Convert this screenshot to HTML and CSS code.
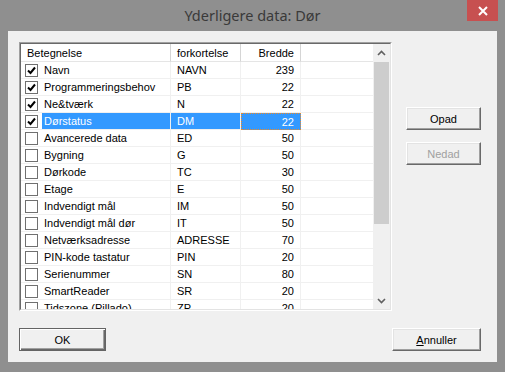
FILE: index.html
```html
<!DOCTYPE html>
<html lang="da">
<head>
    <meta charset="UTF-8">
    <title>Yderligere data: Dør</title>
    <link rel="stylesheet" href="styles.css">
</head>
<body>
    <div class="window">
        <div class="titlebar">
            <span class="title">Yderligere data: Dør</span>
            <div class="close">
                <svg width="10" height="10" viewBox="0 0 10 10">
                    <path d="M1 1 L9 9 M9 1 L1 9" stroke="#fff" stroke-width="2"/>
                </svg>
            </div>
        </div>

        <div class="client">
            <div class="main">
                <div class="listview">
                    <div class="inner">
                        <div class="grid" id="grid">
                            <div class="hcell first">Betegnelse</div>
                            <div class="hcell">forkortelse</div>
                            <div class="hcell num">Bredde</div>
                            <div class="hcell filler"></div>
                        </div>
                        <div class="scrollbar">
                            <div class="arrow">
                                <svg width="9" height="6" viewBox="0 0 9 6"><path d="M1 5 L4.5 1.5 L8 5" stroke="#606060" stroke-width="1.6" fill="none"/></svg>
                            </div>
                            <div class="track"><div class="thumb"></div></div>
                            <div class="arrow">
                                <svg width="9" height="6" viewBox="0 0 9 6"><path d="M1 1 L4.5 4.5 L8 1" stroke="#606060" stroke-width="1.6" fill="none"/></svg>
                            </div>
                        </div>
                    </div>
                </div>

                <div class="side">
                    <button class="btn">Opad</button>
                    <button class="btn disabled">Nedad</button>
                </div>
            </div>

            <div class="bottom">
                <button class="btn default ok">OK</button>
                <button class="btn cancel"><u>A</u>nnuller</button>
            </div>
        </div>
    </div>

    <script>
        // rækker i listen
        const rows = [
            ['Navn', 'NAVN', 239, true],
            ['Programmeringsbehov', 'PB', 22, true],
            ['Ne&tværk', 'N', 22, true],
            ['Dørstatus', 'DM', 22, true],
            ['Avancerede data', 'ED', 50, false],
            ['Bygning', 'G', 50, false],
            ['Dørkode', 'TC', 30, false],
            ['Etage', 'E', 50, false],
            ['Indvendigt mål', 'IM', 50, false],
            ['Indvendigt mål dør', 'IT', 50, false],
            ['Netværksadresse', 'ADRESSE', 70, false],
            ['PIN-kode tastatur', 'PIN', 20, false],
            ['Serienummer', 'SN', 80, false],
            ['SmartReader', 'SR', 20, false],
            ['Tidszone (Pillado)', 'ZP', 20, false]
        ];
        const selected = 3;
        const grid = document.getElementById('grid');
        const checkSvg = '<svg width="9" height="9" viewBox="0 0 9 9"><path d="M1 4.5 L3.5 7 L8 1.5" stroke="#000" stroke-width="2" fill="none"/></svg>';

        rows.forEach((r, i) => {
            const sel = i === selected ? ' sel' : '';
            grid.insertAdjacentHTML('beforeend',
                '<div class="cell first">' +
                    '<span class="check">' + (r[3] ? checkSvg : '') + '</span>' +
                    '<span class="label' + sel + '"></span>' +
                '</div>' +
                '<div class="cell' + sel + '"></div>' +
                '<div class="cell num' + sel + (sel ? ' focus' : '') + '">' + r[2] + '</div>' +
                '<div class="cell filler"></div>');
            const cells = grid.children;
            const n = cells.length;
            cells[n - 4].querySelector('.label').textContent = r[0];
            cells[n - 3].textContent = r[1];
        });
    </script>
</body>
</html>
```

FILE: styles.css
```css
body {
    margin: 0;
    font-family: 'Liberation Sans', Arial, sans-serif;
    font-size: 11px;
}

.window {
    width: 505px;
    height: 372px;
    background-color: #8f8f8f;
    display: flex;
    flex-direction: column;
}

.titlebar {
    position: relative;
    height: 31px;
    display: flex;
    align-items: center;
    justify-content: center;
}

.title {
    font-family: 'Noto Sans', 'Open Sans', sans-serif;
    font-size: 14.5px;
    color: #3a3a3a;
    margin-top: -1px;
}

.close {
    position: absolute;
    right: 7px;
    top: 0;
    width: 31px;
    height: 21px;
    background-color: #c75050;
    display: flex;
    align-items: center;
    justify-content: center;
}

.client {
    flex: 1;
    margin: 0 8px 10px 8px;
    background-color: #f0f0f0;
    padding: 11px 16px 11px 11px;
    display: flex;
    flex-direction: column;
    gap: 17px;
}

.main {
    display: flex;
    gap: 14px;
}

.listview {
    width: 373px;
    height: 269px;
    box-sizing: border-box;
    border: 1px solid;
    border-color: #a0a0a0 #ffffff #ffffff #a0a0a0;
}

.inner {
    height: 100%;
    box-sizing: border-box;
    border: 1px solid;
    border-color: #696969 #e3e3e3 #e3e3e3 #696969;
    background-color: #fff;
    display: flex;
    overflow: hidden;
}

.grid {
    flex: 1;
    display: grid;
    grid-template-columns: 150px 70px 60px 1fr;
    grid-auto-rows: 17px;
    grid-template-rows: 18px;
    align-content: start;
    overflow: hidden;
}

.hcell {
    border-right: 1px solid #d5d5d5;
    border-bottom: 1px solid #e5e5e5;
    padding: 0 6px;
    display: flex;
    align-items: center;
    color: #000;
    white-space: nowrap;
}

.hcell.first {
    padding-left: 6px;
}

.hcell.filler {
    border-right: none;
}

.cell {
    border-right: 1px solid #f0f0f0;
    border-bottom: 1px solid #f0f0f0;
    padding: 0 6px;
    display: flex;
    align-items: center;
    white-space: nowrap;
    overflow: hidden;
}

.num {
    justify-content: flex-end;
}

.cell.first {
    padding: 0;
}

.cell.filler {
    border-right: none;
}

.check {
    width: 11px;
    height: 11px;
    margin: 0 4px 0 4px;
    border: 1px solid #707070;
    background-color: #fff;
    display: flex;
    align-items: center;
    justify-content: center;
    flex-shrink: 0;
}

.label {
    align-self: stretch;
    flex: 1;
    display: flex;
    align-items: center;
    padding-left: 2px;
}

.sel {
    background-color: #3399ff;
    color: #fff;
}

.cell.focus {
    border: 1px dotted #f08a24;
}

.scrollbar {
    width: 17px;
    background-color: #f0f0f0;
    display: flex;
    flex-direction: column;
}

.arrow {
    height: 17px;
    display: flex;
    align-items: center;
    justify-content: center;
}

.track {
    flex: 1;
    padding: 1px 1px 0 1px;
}

.thumb {
    height: 162px;
    background-color: #cdcdcd;
}

.side {
    display: flex;
    flex-direction: column;
    gap: 12px;
    padding-top: 65px;
}

.btn {
    font-family: 'Liberation Sans', Arial, sans-serif;
    font-size: 11px;
    height: 23px;
    width: 75px;
    background-color: #f0f0f0;
    color: #000;
    border: 1px solid;
    border-color: #ffffff #696969 #696969 #ffffff;
    box-shadow: inset -1px -1px 0 #a0a0a0, inset 1px 1px 0 #e3e3e3;
    padding: 0;
}

.btn.disabled {
    color: #a0a0a0;
}

.bottom {
    display: flex;
    justify-content: space-between;
}

.ok {
    width: 87px;
}

.cancel {
    width: 89px;
}

.btn.default {
    border: 1px solid #646464;
    box-shadow: inset 1px 1px 0 #fff, inset -1px -1px 0 #696969, inset -2px -2px 0 #a0a0a0;
}
```
